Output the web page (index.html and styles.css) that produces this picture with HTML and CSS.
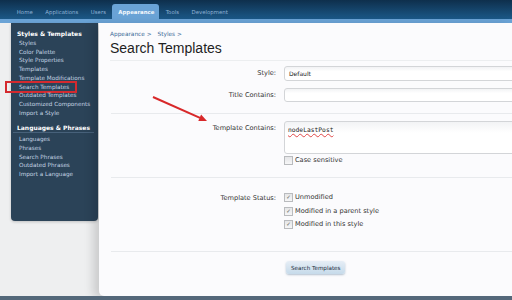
FILE: index.html
```html
<!DOCTYPE html>
<html lang="en">
<head>
  <meta charset="UTF-8" />
  <title>Search Templates | Admin</title>
  <link rel="stylesheet" href="styles.css">
</head>
<body>
  <div class="topbar">
    <nav class="tabs">
      <span class="tab">Home</span>
      <span class="tab">Applications</span>
      <span class="tab">Users</span>
      <span class="tab active">Appearance</span>
      <span class="tab">Tools</span>
      <span class="tab">Development</span>
    </nav>
  </div>

  <div class="page">
    <!-- Side menu -->
    <aside class="sidebar">
      <div class="side-head">Styles &amp; Templates</div>
      <ul class="side-list">
        <li>Styles</li>
        <li>Color Palette</li>
        <li>Style Properties</li>
        <li>Templates</li>
        <li>Template Modifications</li>
        <li class="marked">Search Templates</li>
        <li>Outdated Templates</li>
        <li>Customized Components</li>
        <li>Import a Style</li>
      </ul>
      <div class="side-head lined">Languages &amp; Phrases</div>
      <ul class="side-list">
        <li>Languages</li>
        <li>Phrases</li>
        <li>Search Phrases</li>
        <li>Outdated Phrases</li>
        <li>Import a Language</li>
      </ul>
    </aside>

    <!-- Content -->
    <main class="panel">
      <div class="crumbs"><span>Appearance &gt;</span><span>Styles &gt;</span></div>
      <h1 class="titulo">Search Templates</h1>

      <form class="form">
        <div class="row r-style">
          <label class="lbl">Style:</label>
          <div class="ctl"><div class="input select">Default</div></div>
        </div>
        <div class="row r-title">
          <label class="lbl">Title Contains:</label>
          <div class="ctl"><div class="input short"></div></div>
        </div>
        <div class="sep s1"></div>
        <div class="row top r-contains">
          <label class="lbl">Template Contains:</label>
          <div class="ctl">
            <div class="input area"><span class="typo">nodeLastPost</span></div>
            <div class="check"><span class="box"></span>Case sensitive</div>
          </div>
        </div>
        <div class="sep s2"></div>
        <div class="row top r-status">
          <label class="lbl">Template Status:</label>
          <div class="ctl">
            <div class="check"><span class="box on">&#10003;</span>Unmodified</div>
            <div class="check"><span class="box on">&#10003;</span>Modified in a parent style</div>
            <div class="check"><span class="box on">&#10003;</span>Modified in this style</div>
          </div>
        </div>
        <div class="sep s3"></div>
        <div class="row r-submit">
          <span class="lbl"></span>
          <div class="ctl"><button type="button" class="btn">Search Templates</button></div>
        </div>
      </form>

      <svg class="arrow" width="64" height="34" viewBox="0 0 64 34">
        <line x1="2" y1="2" x2="49" y2="22.8" stroke="#d8282a" stroke-width="2"/>
        <polygon points="56,26 47.3,25.9 50.1,19.5" fill="#d8282a"/>
      </svg>
    </main>
  </div>
  <div class="bottom"></div>
</body>
</html>
```

FILE: styles.css
```css
body {
  margin: 0;
  width: 512px;
  height: 300px;
  overflow: hidden;
  background: #eeeff0;
  font-family: 'DejaVu Sans', Verdana, sans-serif;
  position: relative;
}
.topbar {
  height: 19px;
  background: linear-gradient(#0e2f4c, #1b5887);
  border-bottom: 4px solid #6aa3d6;
}
.tabs {
  display: flex;
  align-items: flex-end;
  height: 19px;
  padding-left: 10.5px;
}
.tab {
  font-size: 5.4px;
  color: #8fb3d6;
  padding: 0 6.3px 3px 6.3px;
  line-height: 8px;
  white-space: nowrap;
}
.tab.active {
  background: #6aa3d6;
  color: #f4f8fc;
  font-weight: bold;
  border-radius: 3px 3px 0 0;
  padding: 4px 5px 3px 6px;
}
.page {
  display: flex;
  align-items: flex-start;
  height: 273px;
}
.sidebar {
  margin-left: 11px;
  width: 87px;
  height: 192px;
  background: #2b4358;
  border-radius: 0 0 4px 4px;
  padding-top: 6px;
  box-shadow: 0 1px 3px #0003;
}
.side-head {
  color: #fff;
  font-weight: bold;
  font-size: 6px;
  line-height: 9px;
  padding-left: 6px;
  white-space: nowrap;
}
.side-head.lined {
  margin: 7px 4px 1px 2px;
  padding-left: 4px;
  line-height: 8px;
  border-bottom: 1px solid #47617a;
}
.side-list {
  list-style: none;
  margin: 0;
  padding: 1px 0 0 8px;
}
.side-list li {
  color: #c3d3e3;
  font-size: 5.7px;
  line-height: 8.7px;
  white-space: nowrap;
  position: relative;
}
.side-list li.marked::after {
  content: '';
  position: absolute;
  left: -14px;
  top: -2px;
  width: 68px;
  height: 8px;
  border: 2px solid #d42a2f;
}
.panel {
  flex: 1;
  height: 273px;
  margin-left: 1px;
  background: #fbfbfd;
  border-radius: 0 0 0 5px;
  box-shadow: -6px 2px 10px #00000026;
  position: relative;
  padding: 7px 0 0 11px;
  box-sizing: border-box;
  overflow: hidden;
}
.crumbs {
  display: flex;
  gap: 6px;
  font-size: 5.8px;
  color: #3d6d99;
  line-height: 8px;
}
.titulo {
  margin: 1px 0 0 0;
  font-family: 'Liberation Sans', Arial, sans-serif;
  font-size: 14px;
  font-weight: normal;
  color: #1f1f1f;
  line-height: 18px;
  padding-bottom: 3px;
  border-bottom: 1px solid #eceef0;
}
.form {
  display: flex;
  flex-direction: column;
  margin-left: -11px;
  padding-top: 5px;
}
.row {
  display: grid;
  grid-template-columns: 177px 1fr;
  column-gap: 8px;
  align-items: center;
}
.row.top { align-items: start; }
.r-title { margin-top: 7px; }
.r-contains { margin-top: 7px; }
.r-status { margin-top: 13px; }
.r-submit { margin-top: 9px; }
.lbl {
  text-align: right;
  font-size: 6.6px;
  color: #333;
  line-height: 9px;
}
.row.top .lbl { padding-top: 3px; }
.ctl { min-width: 0; }
.input {
  width: 260px;
  height: 15px;
  box-sizing: border-box;
  border: 1px solid #d3d5d8;
  border-radius: 3px;
  background: linear-gradient(#f2f3f5, #fff 35%);
  font-size: 6px;
  padding: 3px 4px;
  color: #222;
}
.input.short { height: 14px; }
.input.area {
  height: 33px;
  font-family: 'DejaVu Sans Mono', monospace;
  font-size: 6.3px;
  padding: 4px 3px;
}
.typo {
  text-decoration: underline wavy #e04848;
  text-decoration-thickness: 1px;
  text-underline-offset: 1px;
}
.check {
  display: flex;
  align-items: center;
  gap: 2px;
  font-size: 6.6px;
  color: #333;
  line-height: 13.5px;
}
.box {
  width: 7px;
  height: 7px;
  border: 1px solid #b9bbbe;
  background: linear-gradient(#e4e5e7, #f6f6f7);
  font-size: 5.5px;
  line-height: 7px;
  text-align: center;
  color: #555;
}
.sep {
  height: 1px;
  background: #e8eaed;
  margin-left: 12px;
}
.s1 { margin-top: 11px; }
.s2 { margin-top: 9.5px; }
.s3 { margin-top: 19.5px; }
.btn {
  display: block;
  margin-left: 2px;
  font-family: 'DejaVu Sans', sans-serif;
  font-size: 5.6px;
  color: #1d2c3c;
  padding: 0 5px;
  height: 13px;
  border: none;
  border-radius: 3px;
  background: linear-gradient(#e6eef6, #c6daea);
  box-shadow: 0 1px 2px #6d8aa480;
}
.arrow {
  position: absolute;
  left: 52px;
  top: 72px;
}
.bottom {
  position: absolute;
  left: 0;
  right: 0;
  bottom: 0;
  height: 4px;
  background: #54687a;
}
```
